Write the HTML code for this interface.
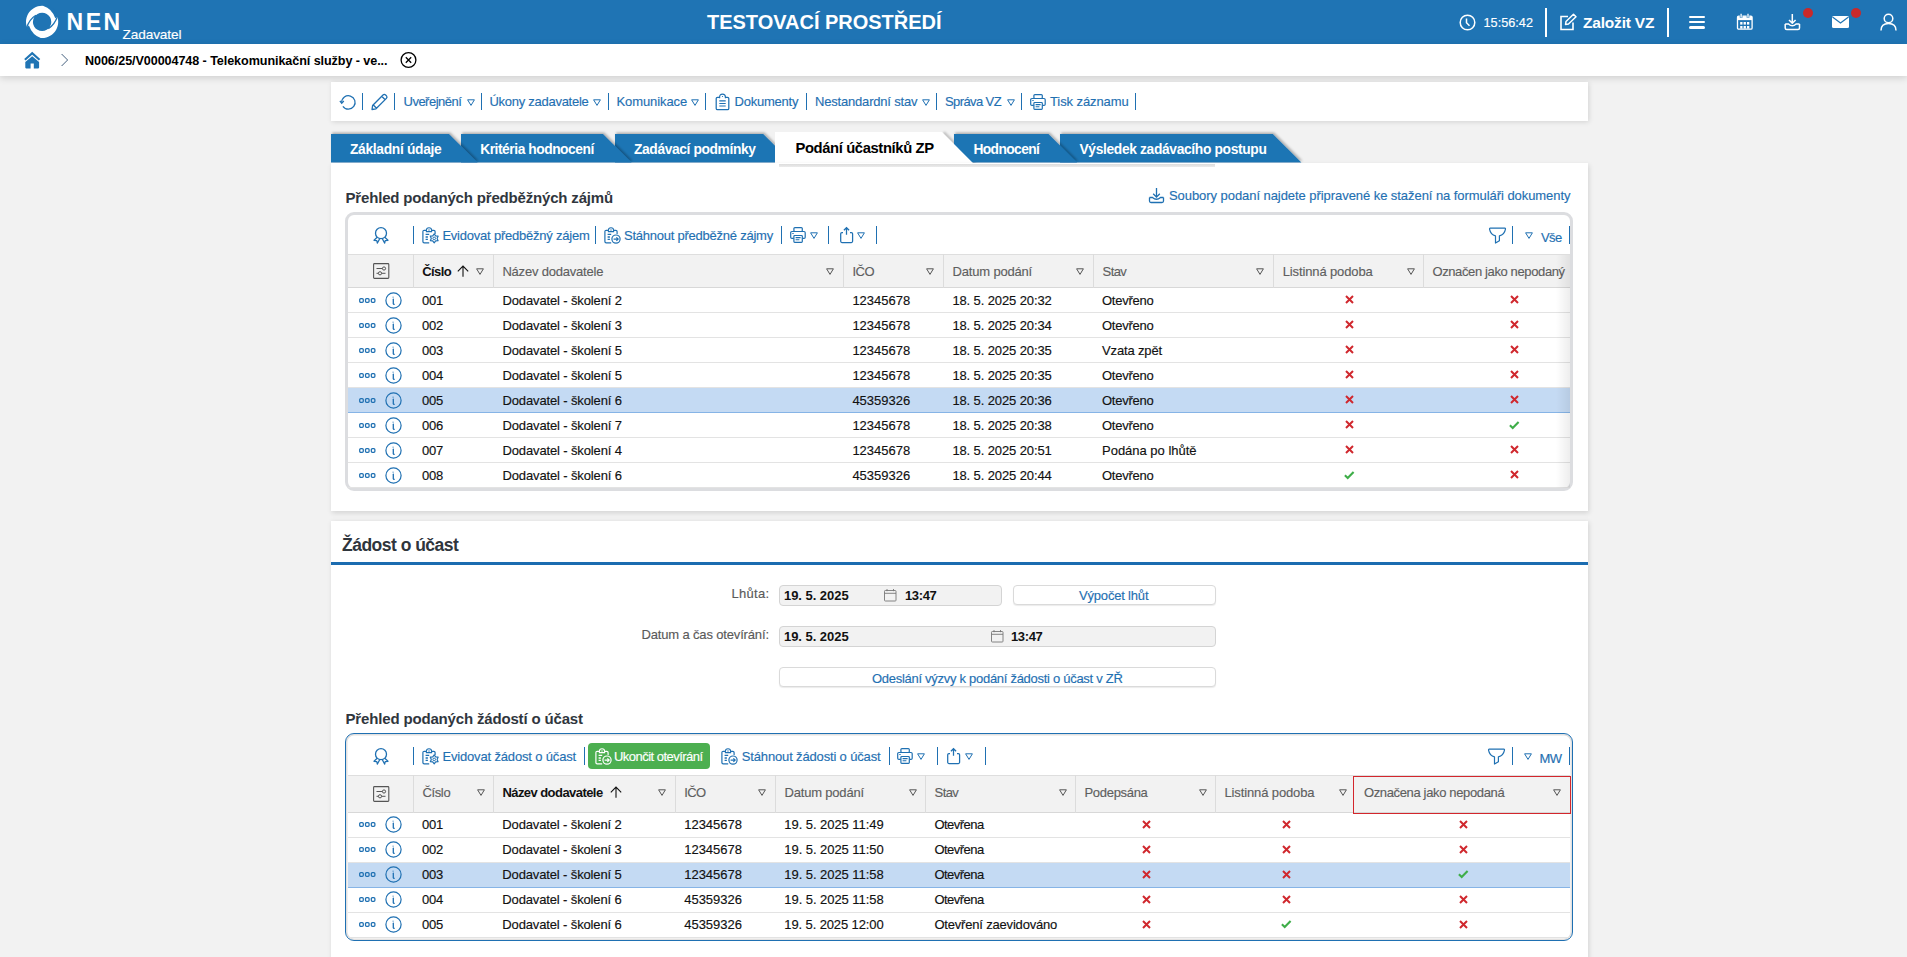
<!DOCTYPE html>
<html><head><meta charset="utf-8"><title>NEN</title>
<style>
html,body{margin:0;padding:0;}
body{width:1907px;height:957px;overflow:hidden;background:#f2f2f2;position:relative;font-family:"Liberation Sans", sans-serif;}
.t{position:absolute;white-space:nowrap;}
.r{-webkit-text-stroke:0.15px currentColor;}
.b{position:absolute;}
svg.b{overflow:visible}
</style></head><body>

<div class="b" style="left:0px;top:0px;width:1907px;height:44px;background:#1f74b4"></div>
<svg class="b" style="left:22px;top:2px" width="40" height="40" viewBox="0 0 40 40">
<path d="M20.1 3.8 A16.1 16.1 0 1 1 20.09 3.8 Z M20.1 10.7 A9.2 9.2 0 1 0 20.11 10.7 Z" fill="#fff" fill-rule="evenodd"/>
<path d="M13.9 13.2 Q7.5 17 4.6 25.8" fill="none" stroke="#1f74b4" stroke-width="1.3"/>
<path d="M4.3 25.7 A16.8 16.8 0 0 0 18.7 36.7 L18.7 35.9 Q10.5 33.5 6.9 23.6 Z" fill="#1f74b4"/>
<path d="M35.9 14.1 A16.8 16.8 0 0 0 21.5 3.1 L21.5 3.9 Q29.7 6.3 33.3 16.2 Z" fill="#1f74b4"/>
<path d="M26.3 26.6 Q32.7 22.8 35.6 14" fill="none" stroke="#1f74b4" stroke-width="1.3"/>
</svg>
<div class="t" style="left:66.5px;top:11.23px;font-size:23px;line-height:23px;font-weight:700;color:#fff;letter-spacing:2.525px;">NEN</div>
<div class="t r" style="left:122.5px;top:28.19px;font-size:13.6px;line-height:13.6px;font-weight:400;color:#fff;letter-spacing:-0.085px;">Zadavatel</div>
<div class="t" style="left:707px;top:12.37px;font-size:20px;line-height:20px;font-weight:700;color:#fff;letter-spacing:-0.016px;">TESTOVACÍ PROSTŘEDÍ</div>
<svg class="b" style="left:1459px;top:14px" width="17" height="17" viewBox="0 0 17 17"><circle cx="8.5" cy="8.5" r="7.3" fill="none" stroke="#fff" stroke-width="1.5"/><path d="M7.5 4.5 L7.5 8.8 L10.5 11.8" fill="none" stroke="#fff" stroke-width="1.5"/></svg>
<div class="t r" style="left:1483.5px;top:16.75px;font-size:12.7px;line-height:12.7px;font-weight:400;color:#fff;letter-spacing:0.010px;">15:56:42</div>
<div class="b" style="left:1545px;top:8px;width:2px;height:29px;background:#fff"></div>
<svg class="b" style="left:1559px;top:13px" width="18" height="18" viewBox="0 0 18 18"><path d="M9 3.5 H2 V16.5 H14 V9.5" fill="none" stroke="#fff" stroke-width="1.6"/><path d="M6.5 11.5 L7 8.5 L14.5 1.2 L17 3.7 L9.5 11 Z" fill="none" stroke="#fff" stroke-width="1.5" stroke-linejoin="round"/></svg>
<div class="t" style="left:1583px;top:14.88px;font-size:15.5px;line-height:15.5px;font-weight:700;color:#fff;letter-spacing:-0.192px;">Založit VZ</div>
<div class="b" style="left:1667px;top:8px;width:2px;height:29px;background:#fff"></div>
<div class="b" style="left:1689px;top:15.5px;width:16px;height:2.8px;background:#fff;border-radius:1.5px"></div>
<div class="b" style="left:1689px;top:20.7px;width:16px;height:2.8px;background:#fff;border-radius:1.5px"></div>
<div class="b" style="left:1689px;top:25.9px;width:16px;height:2.8px;background:#fff;border-radius:1.5px"></div>
<svg class="b" style="left:1736px;top:13px" width="18" height="18" viewBox="0 0 18 18"><rect x="1.5" y="3.2" width="14.6" height="13" rx="1.2" fill="none" stroke="#fff" stroke-width="1.3"/><rect x="1.5" y="3.2" width="14.6" height="3.9" fill="#fff"/><path d="M5.1 0.8 V4.8 M12 0.8 V4.8" stroke="#1f74b4" stroke-width="2.6"/><path d="M5.1 0.8 V4.6 M12 0.8 V4.6" stroke="#fff" stroke-width="1.3"/><rect x="4.2" y="9" width="2.3" height="2.6" fill="#fff"/><rect x="4.2" y="13" width="2.3" height="2.6" fill="#fff"/><rect x="7.6" y="9" width="2.3" height="2.6" fill="#fff"/><rect x="7.6" y="13" width="2.3" height="2.6" fill="#fff"/><rect x="11.0" y="9" width="2.3" height="2.6" fill="#fff"/><rect x="11.0" y="13" width="2.3" height="2.6" fill="#fff"/></svg>
<svg class="b" style="left:1784px;top:13px" width="18" height="18" viewBox="0 0 18 18"><path d="M8.3 1 V10 M5 7 L8.3 10.3 L11.6 7" fill="none" stroke="#fff" stroke-width="1.5"/><path d="M1.2 11 V15 Q1.2 16.5 2.7 16.5 H14 Q15.5 16.5 15.5 15 V11 M1.2 11 H4.5 Q8.3 14.5 12.1 11 H15.5" fill="none" stroke="#fff" stroke-width="1.5"/></svg>
<div class="b" style="left:1803px;top:8px;width:10px;height:10px;border-radius:50%;background:#c8292b"></div>
<svg class="b" style="left:1831px;top:15px" width="19" height="14" viewBox="0 0 19 14"><rect x="1" y="1" width="17" height="12" rx="1.5" fill="#fff"/><path d="M1.5 2 L9.5 8 L17.5 2" fill="none" stroke="#1f74b4" stroke-width="1.2"/></svg>
<div class="b" style="left:1851px;top:8px;width:10px;height:10px;border-radius:50%;background:#c8292b"></div>
<svg class="b" style="left:1880px;top:13px" width="17" height="18" viewBox="0 0 17 18"><circle cx="8.5" cy="5.5" r="4.3" fill="none" stroke="#fff" stroke-width="1.5"/><path d="M1 17.5 Q1 10.5 8.5 10.5 Q16 10.5 16 17.5" fill="none" stroke="#fff" stroke-width="1.5"/></svg>
<div class="b" style="left:0px;top:44px;width:1907px;height:32px;background:#fff;box-shadow:0 2px 7px rgba(0,0,0,0.15)"></div>
<svg class="b" style="left:24px;top:51.5px" width="17" height="17" viewBox="0 0 17 17"><path d="M0.9 7.7 L8.2 1.2 L15.5 7.7" fill="none" stroke="#1f74b4" stroke-width="2.2"/><path d="M1.3 10 L8.2 4.3 L15.1 10 V15.6 Q15.1 16.4 14.3 16.4 H9.8 V11.6 H6.6 V16.4 H2.1 Q1.3 16.4 1.3 15.6 Z" fill="#1f74b4"/></svg>
<svg class="b" style="left:60px;top:53px" width="10" height="14" viewBox="0 0 10 14"><path d="M1.6 1 L7.6 7 L1.6 13" fill="none" stroke="#44607e" stroke-width="1"/></svg>
<div class="t" style="left:85px;top:55.33px;font-size:12.6px;line-height:12.6px;font-weight:700;color:#000;letter-spacing:-0.079px;">N006/25/V00004748 - Telekomunikační služby - ve...</div>
<svg class="b" style="left:400px;top:52px" width="17" height="17" viewBox="0 0 17 17"><circle cx="8.5" cy="8" r="7.4" fill="none" stroke="#000" stroke-width="1.3"/><path d="M5.8 5.3 L11.2 10.7 M11.2 5.3 L5.8 10.7" stroke="#000" stroke-width="1.3"/></svg>
<div class="b" style="left:331px;top:82px;width:1257px;height:39px;background:#fff;box-shadow:1px 1px 5px rgba(0,0,0,0.13)"></div>
<svg class="b" style="left:338.8px;top:94.6px" width="18" height="16" viewBox="0 0 18 16"><path d="M3.9 11.3 A6.7 6.7 0 1 0 2.7 7.6" fill="none" stroke="#1f70b2" stroke-width="1.25"/><path d="M0.9 5.8 L2.7 8.3 L4.8 6" fill="none" stroke="#1f70b2" stroke-width="1.25"/></svg>
<div class="b" style="left:361.5px;top:93px;width:1.3px;height:16.799999999999997px;background:#1f70b2"></div>
<svg class="b" style="left:370px;top:93px" width="18" height="18" viewBox="0 0 18 18"><path d="M2 16.5 L2.6 12.5 L13 2 Q14.3 0.8 15.6 2 L16.5 2.9 Q17.6 4.2 16.4 5.4 L6 15.8 Z M11.7 3.3 L15.2 6.8 M3.1 11.8 L6.3 15" fill="none" stroke="#1f70b2" stroke-width="1.3" stroke-linejoin="round"/></svg>
<div class="b" style="left:393.5px;top:93px;width:1.3px;height:16.799999999999997px;background:#1f70b2"></div>
<div class="t r" style="left:403.5px;top:94.50px;font-size:13px;line-height:13px;font-weight:400;color:#1f70b2;letter-spacing:-0.506px;">Uveřejnění</div>
<svg class="b" style="left:466.5px;top:99px" width="8" height="7" viewBox="0 0 8 7"><path d="M0.6 0.8 L7.4 0.8 L4 6.4 Z" fill="none" stroke="#1f70b2" stroke-width="1.0" stroke-linejoin="round"/></svg>
<div class="b" style="left:480.5px;top:93px;width:1.3px;height:16.799999999999997px;background:#1f70b2"></div>
<div class="t r" style="left:489.5px;top:94.50px;font-size:13px;line-height:13px;font-weight:400;color:#1f70b2;letter-spacing:-0.274px;">Úkony zadavatele</div>
<svg class="b" style="left:593px;top:99px" width="8" height="7" viewBox="0 0 8 7"><path d="M0.6 0.8 L7.4 0.8 L4 6.4 Z" fill="none" stroke="#1f70b2" stroke-width="1.0" stroke-linejoin="round"/></svg>
<div class="b" style="left:607.5px;top:93px;width:1.3px;height:16.799999999999997px;background:#1f70b2"></div>
<div class="t r" style="left:616.5px;top:94.50px;font-size:13px;line-height:13px;font-weight:400;color:#1f70b2;letter-spacing:-0.090px;">Komunikace</div>
<svg class="b" style="left:691px;top:99px" width="8" height="7" viewBox="0 0 8 7"><path d="M0.6 0.8 L7.4 0.8 L4 6.4 Z" fill="none" stroke="#1f70b2" stroke-width="1.0" stroke-linejoin="round"/></svg>
<div class="b" style="left:704.5px;top:93px;width:1.3px;height:16.799999999999997px;background:#1f70b2"></div>
<svg class="b" style="left:715px;top:93px" width="15" height="18" viewBox="0 0 15 18"><path d="M4.6 4.3 H2.5 Q1.2 4.3 1.2 5.6 V15.4 Q1.2 16.7 2.5 16.7 H12.5 Q13.8 16.7 13.8 15.4 V5.6 Q13.8 4.3 12.5 4.3 H10.4" fill="none" stroke="#1f70b2" stroke-width="1.25"/><path d="M4.6 5.2 V4.1 Q4.6 1.1 7.5 1.1 Q10.4 1.1 10.4 4.1 V5.2" fill="none" stroke="#1f70b2" stroke-width="1.2"/><circle cx="7.5" cy="3.5" r="0.6" fill="#1f70b2"/><path d="M4.3 7.9 H10.7 M4.3 10.5 H10.7 M4.3 13 H10.7" stroke="#1f70b2" stroke-width="1.2"/></svg>
<div class="t r" style="left:734.5px;top:94.50px;font-size:13px;line-height:13px;font-weight:400;color:#1f70b2;letter-spacing:-0.231px;">Dokumenty</div>
<div class="b" style="left:805.5px;top:93px;width:1.3px;height:16.799999999999997px;background:#1f70b2"></div>
<div class="t r" style="left:815px;top:94.50px;font-size:13px;line-height:13px;font-weight:400;color:#1f70b2;letter-spacing:-0.188px;">Nestandardní stav</div>
<svg class="b" style="left:921.5px;top:99px" width="8" height="7" viewBox="0 0 8 7"><path d="M0.6 0.8 L7.4 0.8 L4 6.4 Z" fill="none" stroke="#1f70b2" stroke-width="1.0" stroke-linejoin="round"/></svg>
<div class="b" style="left:935.5px;top:93px;width:1.3px;height:16.799999999999997px;background:#1f70b2"></div>
<div class="t r" style="left:945px;top:94.50px;font-size:13px;line-height:13px;font-weight:400;color:#1f70b2;letter-spacing:-0.597px;">Správa VZ</div>
<svg class="b" style="left:1006.5px;top:99px" width="8" height="7" viewBox="0 0 8 7"><path d="M0.6 0.8 L7.4 0.8 L4 6.4 Z" fill="none" stroke="#1f70b2" stroke-width="1.0" stroke-linejoin="round"/></svg>
<div class="b" style="left:1020.5px;top:93px;width:1.3px;height:16.799999999999997px;background:#1f70b2"></div>
<div class="t r" style="left:1050px;top:94.50px;font-size:13px;line-height:13px;font-weight:400;color:#1f70b2;letter-spacing:-0.089px;">Tisk záznamu</div>
<div class="b" style="left:1134.5px;top:93px;width:1.3px;height:16.799999999999997px;background:#1f70b2"></div>
<div class="b" style="left:331px;top:162.6px;width:1257px;height:4px;background:#fff"></div>
<svg class="b" style="left:325px;top:126px" width="1000" height="45" viewBox="0 0 1000 45"><defs><filter id="ts" x="-10%" y="-40%" width="120%" height="180%"><feDropShadow dx="1.2" dy="-1.5" stdDeviation="0.9" flood-color="#000" flood-opacity="0.28"/></filter></defs><defs><filter id="tb" x="-50%" y="-50%" width="200%" height="200%"><feGaussianBlur stdDeviation="1.1"/></filter></defs><path d="M618.5,6.5 L650.5,38.19999999999999" stroke="rgba(0,0,0,0.22)" stroke-width="3" filter="url(#tb)"/><polygon points="735,8 947.8,8 976.4,36.599999999999994 735,36.599999999999994" fill="#1f74b4" filter="url(#ts)"/><polygon points="629,8 723.5,8 752.1,36.599999999999994 629,36.599999999999994" fill="#1f74b4" filter="url(#ts)"/><polygon points="290,8 438.20000000000005,8 466.80000000000007,36.599999999999994 290,36.599999999999994" fill="#1f74b4" filter="url(#ts)"/><polygon points="136,8 278,8 306.6,36.599999999999994 136,36.599999999999994" fill="#1f74b4" filter="url(#ts)"/><polygon points="6,8 124,8 152.6,36.599999999999994 6,36.599999999999994" fill="#1f74b4" filter="url(#ts)"/><polygon points="450,6 617,6 649.2,38.19999999999999 450,38.19999999999999" fill="#fff"/></svg>
<div class="t" style="left:350px;top:142.82px;font-size:13.8px;line-height:13.8px;font-weight:700;color:#fff;letter-spacing:-0.320px;">Základní údaje</div>
<div class="t" style="left:480.2px;top:142.82px;font-size:13.8px;line-height:13.8px;font-weight:700;color:#fff;letter-spacing:-0.456px;">Kritéria hodnocení</div>
<div class="t" style="left:634px;top:142.82px;font-size:13.8px;line-height:13.8px;font-weight:700;color:#fff;letter-spacing:-0.380px;">Zadávací podmínky</div>
<div class="t" style="left:973.4px;top:142.82px;font-size:13.8px;line-height:13.8px;font-weight:700;color:#fff;letter-spacing:-0.600px;">Hodnocení</div>
<div class="t" style="left:1079.5px;top:142.82px;font-size:13.8px;line-height:13.8px;font-weight:700;color:#fff;letter-spacing:-0.344px;">Výsledek zadávacího postupu</div>
<div class="t" style="left:795.4px;top:140.97px;font-size:14.8px;line-height:14.8px;font-weight:700;color:#000;letter-spacing:-0.381px;">Podání účastníků ZP</div>
<div class="b" style="left:331px;top:163px;width:1257px;height:348px;background:#fff;box-shadow:1px 2px 5px rgba(0,0,0,0.13)"></div>
<div class="b" style="left:779px;top:164.3px;width:436px;height:2.3px;background:linear-gradient(#dcdcdc,#ebebeb)"></div>
<div class="t" style="left:345.5px;top:190.00px;font-size:15px;line-height:15px;font-weight:700;color:#30363d;letter-spacing:-0.174px;">Přehled podaných předběžných zájmů</div>
<svg class="b" style="left:1148px;top:187px" width="18" height="17" viewBox="0 0 18 17"><path d="M8.5 1 V10 M5.2 6.8 L8.5 10.1 L11.8 6.8" fill="none" stroke="#1f70b2" stroke-width="1.3"/><path d="M1.5 10.5 V14 Q1.5 15.5 3 15.5 H14 Q15.5 15.5 15.5 14 V10.5 M1.5 10.5 H4.5 Q8.5 14 12.5 10.5 H15.5" fill="none" stroke="#1f70b2" stroke-width="1.3"/></svg>
<div class="t r" style="left:1169px;top:189.20px;font-size:13px;line-height:13px;font-weight:400;color:#1f70b2;letter-spacing:-0.059px;">Soubory podaní najdete připravené ke stažení na formuláři dokumenty</div>
<svg class="b" style="left:1030px;top:93.6px" width="16" height="17" viewBox="0 0 16 17"><rect x="3.9" y="0.6" width="8.4" height="3.9" rx="1" fill="none" stroke="#1f70b2" stroke-width="1.2"/><path d="M3.9 11.4 H1.9 Q0.7 11.4 0.7 10.2 V5.7 Q0.7 4.5 1.9 4.5 H14 Q15.2 4.5 15.2 5.7 V10.2 Q15.2 11.4 14 11.4 H12.3" fill="none" stroke="#1f70b2" stroke-width="1.2"/><rect x="3.9" y="8.5" width="8.4" height="6.8" rx="0.8" fill="#fff" stroke="#1f70b2" stroke-width="1.2"/><path d="M5.6 10.6 H10.6 M5.6 12.7 H9.4" stroke="#1f70b2" stroke-width="1.1"/><path d="M2.3 6.5 H3.7" stroke="#1f70b2" stroke-width="1"/></svg>
<div class="b" style="left:345px;top:212px;width:1222px;height:273px;border:3px solid #dcdde0;border-radius:9px;background:#fff;"></div>
<div class="b" style="left:348px;top:254.2px;width:1222px;height:33.8px;background:#f2f2f2;border-top:1px solid #dedede;border-bottom:1px solid #d8d8d8;box-sizing:border-box"></div>
<div class="b" style="left:412.8px;top:254.2px;width:1px;height:33.8px;background:#dcdcdc"></div>
<div class="b" style="left:492.9px;top:254.2px;width:1px;height:33.8px;background:#dcdcdc"></div>
<div class="b" style="left:843.1px;top:254.2px;width:1px;height:33.8px;background:#dcdcdc"></div>
<div class="b" style="left:943.1px;top:254.2px;width:1px;height:33.8px;background:#dcdcdc"></div>
<div class="b" style="left:1093.1px;top:254.2px;width:1px;height:33.8px;background:#dcdcdc"></div>
<div class="b" style="left:1273.2px;top:254.2px;width:1px;height:33.8px;background:#dcdcdc"></div>
<div class="b" style="left:1422.9px;top:254.2px;width:1px;height:33.8px;background:#dcdcdc"></div>
<svg class="b" style="left:372.5px;top:263.09999999999997px" width="17" height="16" viewBox="0 0 17 16"><rect x="0.6" y="0.6" width="15.2" height="14.8" rx="0.8" fill="none" stroke="#555" stroke-width="1.1"/><path d="M3.5 5.5 H12.5 M3.5 10.3 H12.5" stroke="#555" stroke-width="1"/><circle cx="11" cy="5.5" r="1.6" fill="#f2f2f2" stroke="#555" stroke-width="1"/><circle cx="7" cy="10.3" r="1.6" fill="#f2f2f2" stroke="#555" stroke-width="1"/></svg>
<div class="t" style="left:422.3px;top:264.80px;font-size:13px;line-height:13px;font-weight:700;color:#111;letter-spacing:-0.600px;">Číslo</div>
<svg class="b" style="left:457px;top:265.0px" width="12" height="12" viewBox="0 0 12 12"><path d="M6 11.8 V1.2 M0.8 6.3 L6 1 L11.2 6.3" fill="none" stroke="#111" stroke-width="1.1"/></svg>
<svg class="b" style="left:476px;top:267.8px" width="8" height="7" viewBox="0 0 8 7"><path d="M0.6 0.8 L7.4 0.8 L4 6.4 Z" fill="none" stroke="#555" stroke-width="1.0" stroke-linejoin="round"/></svg>
<div class="t r" style="left:502.4px;top:264.80px;font-size:13px;line-height:13px;font-weight:400;color:#5f5f5f;letter-spacing:-0.203px;">Název dodavatele</div>
<svg class="b" style="left:826px;top:267.8px" width="8" height="7" viewBox="0 0 8 7"><path d="M0.6 0.8 L7.4 0.8 L4 6.4 Z" fill="none" stroke="#555" stroke-width="1.0" stroke-linejoin="round"/></svg>
<div class="t r" style="left:852.6px;top:264.80px;font-size:13px;line-height:13px;font-weight:400;color:#5f5f5f;letter-spacing:-0.600px;">IČO</div>
<svg class="b" style="left:926px;top:267.8px" width="8" height="7" viewBox="0 0 8 7"><path d="M0.6 0.8 L7.4 0.8 L4 6.4 Z" fill="none" stroke="#555" stroke-width="1.0" stroke-linejoin="round"/></svg>
<div class="t r" style="left:952.6px;top:264.80px;font-size:13px;line-height:13px;font-weight:400;color:#5f5f5f;letter-spacing:-0.186px;">Datum podání</div>
<svg class="b" style="left:1076px;top:267.8px" width="8" height="7" viewBox="0 0 8 7"><path d="M0.6 0.8 L7.4 0.8 L4 6.4 Z" fill="none" stroke="#555" stroke-width="1.0" stroke-linejoin="round"/></svg>
<div class="t r" style="left:1102.6px;top:264.80px;font-size:13px;line-height:13px;font-weight:400;color:#5f5f5f;letter-spacing:-0.600px;">Stav</div>
<svg class="b" style="left:1256px;top:267.8px" width="8" height="7" viewBox="0 0 8 7"><path d="M0.6 0.8 L7.4 0.8 L4 6.4 Z" fill="none" stroke="#555" stroke-width="1.0" stroke-linejoin="round"/></svg>
<div class="t r" style="left:1282.7px;top:264.80px;font-size:13px;line-height:13px;font-weight:400;color:#5f5f5f;letter-spacing:-0.126px;">Listinná podoba</div>
<svg class="b" style="left:1406.5px;top:267.8px" width="8" height="7" viewBox="0 0 8 7"><path d="M0.6 0.8 L7.4 0.8 L4 6.4 Z" fill="none" stroke="#555" stroke-width="1.0" stroke-linejoin="round"/></svg>
<div class="t r" style="left:1432.4px;top:264.80px;font-size:13px;line-height:13px;font-weight:400;color:#5f5f5f;letter-spacing:-0.376px;">Označen jako nepodaný</div>
<div class="b" style="left:348px;top:312.0px;width:1222px;height:1px;background:#e3e3e3"></div>
<svg class="b" style="left:359.1px;top:297.5px" width="18" height="5" viewBox="0 0 18 5"><rect x="0.7" y="0.7" width="3.6" height="3.6" rx="1.1" fill="none" stroke="#1f70b2" stroke-width="1.25"/><rect x="6.5" y="0.7" width="3.6" height="3.6" rx="1.1" fill="none" stroke="#1f70b2" stroke-width="1.25"/><rect x="12.299999999999999" y="0.7" width="3.6" height="3.6" rx="1.1" fill="none" stroke="#1f70b2" stroke-width="1.25"/></svg>
<svg class="b" style="left:385.2px;top:291.6px" width="17" height="17" viewBox="0 0 17 17"><circle cx="8.5" cy="8.5" r="7.6" fill="none" stroke="#1f70b2" stroke-width="1.2"/><path d="M8.1 4.8 V5.4 M7.6 7.5 L8.3 7.3 L8.3 11.8 Q8.6 12.6 9.6 12.2" fill="none" stroke="#1f70b2" stroke-width="1.3"/></svg>
<div class="t r" style="left:422px;top:293.80px;font-size:13px;line-height:13px;font-weight:400;color:#111;letter-spacing:-0.180px;">001</div>
<div class="t r" style="left:502.5px;top:293.80px;font-size:13px;line-height:13px;font-weight:400;color:#111;letter-spacing:-0.135px;">Dodavatel - školení 2</div>
<div class="t r" style="left:852.4px;top:293.80px;font-size:13px;line-height:13px;font-weight:400;color:#111;letter-spacing:-0.001px;">12345678</div>
<div class="t r" style="left:952.4px;top:293.80px;font-size:13px;line-height:13px;font-weight:400;color:#111;letter-spacing:-0.114px;">18. 5. 2025 20:32</div>
<div class="t r" style="left:1102px;top:293.80px;font-size:13px;line-height:13px;font-weight:400;color:#111;letter-spacing:-0.263px;">Otevřeno</div>
<svg class="b" style="left:1344.8px;top:295.0px" width="9" height="9" viewBox="0 0 9 9"><path d="M1 1 L8 8 M8 1 L1 8" stroke="#d0282e" stroke-width="2"/></svg>
<svg class="b" style="left:1509.7px;top:295.0px" width="9" height="9" viewBox="0 0 9 9"><path d="M1 1 L8 8 M8 1 L1 8" stroke="#d0282e" stroke-width="2"/></svg>
<div class="b" style="left:348px;top:337.0px;width:1222px;height:1px;background:#e3e3e3"></div>
<svg class="b" style="left:359.1px;top:322.5px" width="18" height="5" viewBox="0 0 18 5"><rect x="0.7" y="0.7" width="3.6" height="3.6" rx="1.1" fill="none" stroke="#1f70b2" stroke-width="1.25"/><rect x="6.5" y="0.7" width="3.6" height="3.6" rx="1.1" fill="none" stroke="#1f70b2" stroke-width="1.25"/><rect x="12.299999999999999" y="0.7" width="3.6" height="3.6" rx="1.1" fill="none" stroke="#1f70b2" stroke-width="1.25"/></svg>
<svg class="b" style="left:385.2px;top:316.6px" width="17" height="17" viewBox="0 0 17 17"><circle cx="8.5" cy="8.5" r="7.6" fill="none" stroke="#1f70b2" stroke-width="1.2"/><path d="M8.1 4.8 V5.4 M7.6 7.5 L8.3 7.3 L8.3 11.8 Q8.6 12.6 9.6 12.2" fill="none" stroke="#1f70b2" stroke-width="1.3"/></svg>
<div class="t r" style="left:422px;top:318.80px;font-size:13px;line-height:13px;font-weight:400;color:#111;letter-spacing:-0.180px;">002</div>
<div class="t r" style="left:502.5px;top:318.80px;font-size:13px;line-height:13px;font-weight:400;color:#111;letter-spacing:-0.135px;">Dodavatel - školení 3</div>
<div class="t r" style="left:852.4px;top:318.80px;font-size:13px;line-height:13px;font-weight:400;color:#111;letter-spacing:-0.001px;">12345678</div>
<div class="t r" style="left:952.4px;top:318.80px;font-size:13px;line-height:13px;font-weight:400;color:#111;letter-spacing:-0.114px;">18. 5. 2025 20:34</div>
<div class="t r" style="left:1102px;top:318.80px;font-size:13px;line-height:13px;font-weight:400;color:#111;letter-spacing:-0.263px;">Otevřeno</div>
<svg class="b" style="left:1344.8px;top:320.0px" width="9" height="9" viewBox="0 0 9 9"><path d="M1 1 L8 8 M8 1 L1 8" stroke="#d0282e" stroke-width="2"/></svg>
<svg class="b" style="left:1509.7px;top:320.0px" width="9" height="9" viewBox="0 0 9 9"><path d="M1 1 L8 8 M8 1 L1 8" stroke="#d0282e" stroke-width="2"/></svg>
<div class="b" style="left:348px;top:362.0px;width:1222px;height:1px;background:#e3e3e3"></div>
<svg class="b" style="left:359.1px;top:347.5px" width="18" height="5" viewBox="0 0 18 5"><rect x="0.7" y="0.7" width="3.6" height="3.6" rx="1.1" fill="none" stroke="#1f70b2" stroke-width="1.25"/><rect x="6.5" y="0.7" width="3.6" height="3.6" rx="1.1" fill="none" stroke="#1f70b2" stroke-width="1.25"/><rect x="12.299999999999999" y="0.7" width="3.6" height="3.6" rx="1.1" fill="none" stroke="#1f70b2" stroke-width="1.25"/></svg>
<svg class="b" style="left:385.2px;top:341.6px" width="17" height="17" viewBox="0 0 17 17"><circle cx="8.5" cy="8.5" r="7.6" fill="none" stroke="#1f70b2" stroke-width="1.2"/><path d="M8.1 4.8 V5.4 M7.6 7.5 L8.3 7.3 L8.3 11.8 Q8.6 12.6 9.6 12.2" fill="none" stroke="#1f70b2" stroke-width="1.3"/></svg>
<div class="t r" style="left:422px;top:343.80px;font-size:13px;line-height:13px;font-weight:400;color:#111;letter-spacing:-0.180px;">003</div>
<div class="t r" style="left:502.5px;top:343.80px;font-size:13px;line-height:13px;font-weight:400;color:#111;letter-spacing:-0.135px;">Dodavatel - školení 5</div>
<div class="t r" style="left:852.4px;top:343.80px;font-size:13px;line-height:13px;font-weight:400;color:#111;letter-spacing:-0.001px;">12345678</div>
<div class="t r" style="left:952.4px;top:343.80px;font-size:13px;line-height:13px;font-weight:400;color:#111;letter-spacing:-0.114px;">18. 5. 2025 20:35</div>
<div class="t r" style="left:1102px;top:343.80px;font-size:13px;line-height:13px;font-weight:400;color:#111;letter-spacing:-0.146px;">Vzata zpět</div>
<svg class="b" style="left:1344.8px;top:345.0px" width="9" height="9" viewBox="0 0 9 9"><path d="M1 1 L8 8 M8 1 L1 8" stroke="#d0282e" stroke-width="2"/></svg>
<svg class="b" style="left:1509.7px;top:345.0px" width="9" height="9" viewBox="0 0 9 9"><path d="M1 1 L8 8 M8 1 L1 8" stroke="#d0282e" stroke-width="2"/></svg>
<div class="b" style="left:348px;top:387.0px;width:1222px;height:1px;background:#e3e3e3"></div>
<svg class="b" style="left:359.1px;top:372.5px" width="18" height="5" viewBox="0 0 18 5"><rect x="0.7" y="0.7" width="3.6" height="3.6" rx="1.1" fill="none" stroke="#1f70b2" stroke-width="1.25"/><rect x="6.5" y="0.7" width="3.6" height="3.6" rx="1.1" fill="none" stroke="#1f70b2" stroke-width="1.25"/><rect x="12.299999999999999" y="0.7" width="3.6" height="3.6" rx="1.1" fill="none" stroke="#1f70b2" stroke-width="1.25"/></svg>
<svg class="b" style="left:385.2px;top:366.6px" width="17" height="17" viewBox="0 0 17 17"><circle cx="8.5" cy="8.5" r="7.6" fill="none" stroke="#1f70b2" stroke-width="1.2"/><path d="M8.1 4.8 V5.4 M7.6 7.5 L8.3 7.3 L8.3 11.8 Q8.6 12.6 9.6 12.2" fill="none" stroke="#1f70b2" stroke-width="1.3"/></svg>
<div class="t r" style="left:422px;top:368.80px;font-size:13px;line-height:13px;font-weight:400;color:#111;letter-spacing:-0.180px;">004</div>
<div class="t r" style="left:502.5px;top:368.80px;font-size:13px;line-height:13px;font-weight:400;color:#111;letter-spacing:-0.135px;">Dodavatel - školení 5</div>
<div class="t r" style="left:852.4px;top:368.80px;font-size:13px;line-height:13px;font-weight:400;color:#111;letter-spacing:-0.001px;">12345678</div>
<div class="t r" style="left:952.4px;top:368.80px;font-size:13px;line-height:13px;font-weight:400;color:#111;letter-spacing:-0.114px;">18. 5. 2025 20:35</div>
<div class="t r" style="left:1102px;top:368.80px;font-size:13px;line-height:13px;font-weight:400;color:#111;letter-spacing:-0.263px;">Otevřeno</div>
<svg class="b" style="left:1344.8px;top:370.0px" width="9" height="9" viewBox="0 0 9 9"><path d="M1 1 L8 8 M8 1 L1 8" stroke="#d0282e" stroke-width="2"/></svg>
<svg class="b" style="left:1509.7px;top:370.0px" width="9" height="9" viewBox="0 0 9 9"><path d="M1 1 L8 8 M8 1 L1 8" stroke="#d0282e" stroke-width="2"/></svg>
<div class="b" style="left:348px;top:388.0px;width:1222px;height:25px;background:#c4daf3;border-bottom:1px solid #86b4e6;box-sizing:border-box"></div>
<svg class="b" style="left:359.1px;top:397.5px" width="18" height="5" viewBox="0 0 18 5"><rect x="0.7" y="0.7" width="3.6" height="3.6" rx="1.1" fill="none" stroke="#1f70b2" stroke-width="1.25"/><rect x="6.5" y="0.7" width="3.6" height="3.6" rx="1.1" fill="none" stroke="#1f70b2" stroke-width="1.25"/><rect x="12.299999999999999" y="0.7" width="3.6" height="3.6" rx="1.1" fill="none" stroke="#1f70b2" stroke-width="1.25"/></svg>
<svg class="b" style="left:385.2px;top:391.6px" width="17" height="17" viewBox="0 0 17 17"><circle cx="8.5" cy="8.5" r="7.6" fill="none" stroke="#1f70b2" stroke-width="1.2"/><path d="M8.1 4.8 V5.4 M7.6 7.5 L8.3 7.3 L8.3 11.8 Q8.6 12.6 9.6 12.2" fill="none" stroke="#1f70b2" stroke-width="1.3"/></svg>
<div class="t r" style="left:422px;top:393.80px;font-size:13px;line-height:13px;font-weight:400;color:#111;letter-spacing:-0.180px;">005</div>
<div class="t r" style="left:502.5px;top:393.80px;font-size:13px;line-height:13px;font-weight:400;color:#111;letter-spacing:-0.135px;">Dodavatel - školení 6</div>
<div class="t r" style="left:852.4px;top:393.80px;font-size:13px;line-height:13px;font-weight:400;color:#111;letter-spacing:-0.001px;">45359326</div>
<div class="t r" style="left:952.4px;top:393.80px;font-size:13px;line-height:13px;font-weight:400;color:#111;letter-spacing:-0.114px;">18. 5. 2025 20:36</div>
<div class="t r" style="left:1102px;top:393.80px;font-size:13px;line-height:13px;font-weight:400;color:#111;letter-spacing:-0.263px;">Otevřeno</div>
<svg class="b" style="left:1344.8px;top:395.0px" width="9" height="9" viewBox="0 0 9 9"><path d="M1 1 L8 8 M8 1 L1 8" stroke="#d0282e" stroke-width="2"/></svg>
<svg class="b" style="left:1509.7px;top:395.0px" width="9" height="9" viewBox="0 0 9 9"><path d="M1 1 L8 8 M8 1 L1 8" stroke="#d0282e" stroke-width="2"/></svg>
<div class="b" style="left:348px;top:437.0px;width:1222px;height:1px;background:#e3e3e3"></div>
<svg class="b" style="left:359.1px;top:422.5px" width="18" height="5" viewBox="0 0 18 5"><rect x="0.7" y="0.7" width="3.6" height="3.6" rx="1.1" fill="none" stroke="#1f70b2" stroke-width="1.25"/><rect x="6.5" y="0.7" width="3.6" height="3.6" rx="1.1" fill="none" stroke="#1f70b2" stroke-width="1.25"/><rect x="12.299999999999999" y="0.7" width="3.6" height="3.6" rx="1.1" fill="none" stroke="#1f70b2" stroke-width="1.25"/></svg>
<svg class="b" style="left:385.2px;top:416.6px" width="17" height="17" viewBox="0 0 17 17"><circle cx="8.5" cy="8.5" r="7.6" fill="none" stroke="#1f70b2" stroke-width="1.2"/><path d="M8.1 4.8 V5.4 M7.6 7.5 L8.3 7.3 L8.3 11.8 Q8.6 12.6 9.6 12.2" fill="none" stroke="#1f70b2" stroke-width="1.3"/></svg>
<div class="t r" style="left:422px;top:418.80px;font-size:13px;line-height:13px;font-weight:400;color:#111;letter-spacing:-0.180px;">006</div>
<div class="t r" style="left:502.5px;top:418.80px;font-size:13px;line-height:13px;font-weight:400;color:#111;letter-spacing:-0.135px;">Dodavatel - školení 7</div>
<div class="t r" style="left:852.4px;top:418.80px;font-size:13px;line-height:13px;font-weight:400;color:#111;letter-spacing:-0.001px;">12345678</div>
<div class="t r" style="left:952.4px;top:418.80px;font-size:13px;line-height:13px;font-weight:400;color:#111;letter-spacing:-0.114px;">18. 5. 2025 20:38</div>
<div class="t r" style="left:1102px;top:418.80px;font-size:13px;line-height:13px;font-weight:400;color:#111;letter-spacing:-0.263px;">Otevřeno</div>
<svg class="b" style="left:1344.8px;top:420.0px" width="9" height="9" viewBox="0 0 9 9"><path d="M1 1 L8 8 M8 1 L1 8" stroke="#d0282e" stroke-width="2"/></svg>
<svg class="b" style="left:1509.2px;top:420.8px" width="10" height="8" viewBox="0 0 10 8"><path d="M0.9 4.3 L3.7 7 L9.6 0.9" fill="none" stroke="#3fae49" stroke-width="2.1"/></svg>
<div class="b" style="left:348px;top:462.0px;width:1222px;height:1px;background:#e3e3e3"></div>
<svg class="b" style="left:359.1px;top:447.5px" width="18" height="5" viewBox="0 0 18 5"><rect x="0.7" y="0.7" width="3.6" height="3.6" rx="1.1" fill="none" stroke="#1f70b2" stroke-width="1.25"/><rect x="6.5" y="0.7" width="3.6" height="3.6" rx="1.1" fill="none" stroke="#1f70b2" stroke-width="1.25"/><rect x="12.299999999999999" y="0.7" width="3.6" height="3.6" rx="1.1" fill="none" stroke="#1f70b2" stroke-width="1.25"/></svg>
<svg class="b" style="left:385.2px;top:441.6px" width="17" height="17" viewBox="0 0 17 17"><circle cx="8.5" cy="8.5" r="7.6" fill="none" stroke="#1f70b2" stroke-width="1.2"/><path d="M8.1 4.8 V5.4 M7.6 7.5 L8.3 7.3 L8.3 11.8 Q8.6 12.6 9.6 12.2" fill="none" stroke="#1f70b2" stroke-width="1.3"/></svg>
<div class="t r" style="left:422px;top:443.80px;font-size:13px;line-height:13px;font-weight:400;color:#111;letter-spacing:-0.180px;">007</div>
<div class="t r" style="left:502.5px;top:443.80px;font-size:13px;line-height:13px;font-weight:400;color:#111;letter-spacing:-0.135px;">Dodavatel - školení 4</div>
<div class="t r" style="left:852.4px;top:443.80px;font-size:13px;line-height:13px;font-weight:400;color:#111;letter-spacing:-0.001px;">12345678</div>
<div class="t r" style="left:952.4px;top:443.80px;font-size:13px;line-height:13px;font-weight:400;color:#111;letter-spacing:-0.114px;">18. 5. 2025 20:51</div>
<div class="t r" style="left:1102px;top:443.80px;font-size:13px;line-height:13px;font-weight:400;color:#111;letter-spacing:-0.012px;">Podána po lhůtě</div>
<svg class="b" style="left:1344.8px;top:445.0px" width="9" height="9" viewBox="0 0 9 9"><path d="M1 1 L8 8 M8 1 L1 8" stroke="#d0282e" stroke-width="2"/></svg>
<svg class="b" style="left:1509.7px;top:445.0px" width="9" height="9" viewBox="0 0 9 9"><path d="M1 1 L8 8 M8 1 L1 8" stroke="#d0282e" stroke-width="2"/></svg>
<div class="b" style="left:348px;top:487.0px;width:1222px;height:1px;background:#e3e3e3"></div>
<svg class="b" style="left:359.1px;top:472.5px" width="18" height="5" viewBox="0 0 18 5"><rect x="0.7" y="0.7" width="3.6" height="3.6" rx="1.1" fill="none" stroke="#1f70b2" stroke-width="1.25"/><rect x="6.5" y="0.7" width="3.6" height="3.6" rx="1.1" fill="none" stroke="#1f70b2" stroke-width="1.25"/><rect x="12.299999999999999" y="0.7" width="3.6" height="3.6" rx="1.1" fill="none" stroke="#1f70b2" stroke-width="1.25"/></svg>
<svg class="b" style="left:385.2px;top:466.6px" width="17" height="17" viewBox="0 0 17 17"><circle cx="8.5" cy="8.5" r="7.6" fill="none" stroke="#1f70b2" stroke-width="1.2"/><path d="M8.1 4.8 V5.4 M7.6 7.5 L8.3 7.3 L8.3 11.8 Q8.6 12.6 9.6 12.2" fill="none" stroke="#1f70b2" stroke-width="1.3"/></svg>
<div class="t r" style="left:422px;top:468.80px;font-size:13px;line-height:13px;font-weight:400;color:#111;letter-spacing:-0.180px;">008</div>
<div class="t r" style="left:502.5px;top:468.80px;font-size:13px;line-height:13px;font-weight:400;color:#111;letter-spacing:-0.135px;">Dodavatel - školení 6</div>
<div class="t r" style="left:852.4px;top:468.80px;font-size:13px;line-height:13px;font-weight:400;color:#111;letter-spacing:-0.001px;">45359326</div>
<div class="t r" style="left:952.4px;top:468.80px;font-size:13px;line-height:13px;font-weight:400;color:#111;letter-spacing:-0.114px;">18. 5. 2025 20:44</div>
<div class="t r" style="left:1102px;top:468.80px;font-size:13px;line-height:13px;font-weight:400;color:#111;letter-spacing:-0.263px;">Otevřeno</div>
<svg class="b" style="left:1344.3px;top:470.8px" width="10" height="8" viewBox="0 0 10 8"><path d="M0.9 4.3 L3.7 7 L9.6 0.9" fill="none" stroke="#3fae49" stroke-width="2.1"/></svg>
<svg class="b" style="left:1509.7px;top:470.0px" width="9" height="9" viewBox="0 0 9 9"><path d="M1 1 L8 8 M8 1 L1 8" stroke="#d0282e" stroke-width="2"/></svg>
<div class="b" style="left:1556px;top:254.5px;width:14px;height:233px;background:linear-gradient(90deg,rgba(0,0,0,0),rgba(0,0,0,0.07))"></div>
<svg class="b" style="left:373px;top:226.5px" width="17" height="17" viewBox="0 0 17 17"><circle cx="8" cy="6.2" r="5.5" fill="none" stroke="#1f70b2" stroke-width="1.3"/><path d="M4.2 10.2 L1 13.3 L3.8 13.6 L4.3 16.2 L6.6 11.9 M11.8 10.2 L15 13.3 L12.2 13.6 L11.7 16.2 L9.4 11.9" fill="none" stroke="#1f70b2" stroke-width="1.2" stroke-linejoin="round"/></svg>
<div class="b" style="left:412.5px;top:226px;width:1.3px;height:17.5px;background:#1f70b2"></div>
<svg class="b" style="left:421.5px;top:226.5px" width="17" height="17" viewBox="0 0 17 17"><path d="M4.3 3.3 H2.2 Q0.9 3.3 0.9 4.6 V14.6 Q0.9 15.9 2.2 15.9 H7.2 M13.1 7 V4.6 Q13.1 3.3 11.8 3.3 H9.7" fill="none" stroke="#1f70b2" stroke-width="1.2"/><path d="M4.4 4.6 V3.2 Q4.4 0.8 7 0.8 Q9.6 0.8 9.6 3.2 V4.6 Z" fill="none" stroke="#1f70b2" stroke-width="1.1"/><circle cx="7" cy="3" r="0.7" fill="#1f70b2"/><path d="M3.6 7.3 H7.2 M3.6 10 H5.9 M3.6 12.3 H5.9" stroke="#1f70b2" stroke-width="1.3"/><polygon points="12.20,6.90 13.65,8.89 16.10,9.15 15.10,11.40 16.10,13.65 13.65,13.91 12.20,15.90 10.75,13.91 8.30,13.65 9.30,11.40 8.30,9.15 10.75,8.89" fill="#fff" stroke="#1f70b2" stroke-width="1.15" stroke-linejoin="round"/><circle cx="12.2" cy="11.4" r="1.3" fill="none" stroke="#1f70b2" stroke-width="1"/></svg>
<div class="t r" style="left:442.4px;top:229.00px;font-size:13px;line-height:13px;font-weight:400;color:#1f70b2;letter-spacing:-0.219px;">Evidovat předběžný zájem</div>
<div class="b" style="left:594.5px;top:226px;width:1.3px;height:17.5px;background:#1f70b2"></div>
<svg class="b" style="left:604px;top:226.5px" width="17" height="17" viewBox="0 0 17 17"><path d="M4.3 3.3 H2.2 Q0.9 3.3 0.9 4.6 V14.6 Q0.9 15.9 2.2 15.9 H7.2 M13.1 7 V4.6 Q13.1 3.3 11.8 3.3 H9.7" fill="none" stroke="#1f70b2" stroke-width="1.2"/><path d="M4.4 4.6 V3.2 Q4.4 0.8 7 0.8 Q9.6 0.8 9.6 3.2 V4.6 Z" fill="none" stroke="#1f70b2" stroke-width="1.1"/><circle cx="7" cy="3" r="0.7" fill="#1f70b2"/><path d="M3.6 7.3 H7.2 M3.6 10 H5.9 M3.6 12.3 H5.9" stroke="#1f70b2" stroke-width="1.3"/><circle cx="12" cy="12.1" r="4.1" fill="#fff" stroke="#1f70b2" stroke-width="1.2"/><path d="M9.6 12.1 H14.2 M12.4 10.3 L14.2 12.1 L12.4 13.9" fill="none" stroke="#1f70b2" stroke-width="1.2"/></svg>
<div class="t r" style="left:624px;top:229.00px;font-size:13px;line-height:13px;font-weight:400;color:#1f70b2;letter-spacing:-0.237px;">Stáhnout předběžné zájmy</div>
<div class="b" style="left:780.5px;top:226px;width:1.3px;height:17.5px;background:#1f70b2"></div>
<svg class="b" style="left:790px;top:227px" width="16" height="17" viewBox="0 0 16 17"><rect x="3.9" y="0.6" width="8.4" height="3.9" rx="1" fill="none" stroke="#1f70b2" stroke-width="1.2"/><path d="M3.9 11.4 H1.9 Q0.7 11.4 0.7 10.2 V5.7 Q0.7 4.5 1.9 4.5 H14 Q15.2 4.5 15.2 5.7 V10.2 Q15.2 11.4 14 11.4 H12.3" fill="none" stroke="#1f70b2" stroke-width="1.2"/><rect x="3.9" y="8.5" width="8.4" height="6.8" rx="0.8" fill="#fff" stroke="#1f70b2" stroke-width="1.2"/><path d="M5.6 10.6 H10.6 M5.6 12.7 H9.4" stroke="#1f70b2" stroke-width="1.1"/><path d="M2.3 6.5 H3.7" stroke="#1f70b2" stroke-width="1"/></svg>
<svg class="b" style="left:810.3px;top:231.5px" width="8" height="7" viewBox="0 0 8 7"><path d="M0.6 0.8 L7.4 0.8 L4 6.4 Z" fill="none" stroke="#1f70b2" stroke-width="1.0" stroke-linejoin="round"/></svg>
<div class="b" style="left:827.5px;top:226px;width:1.3px;height:17.5px;background:#1f70b2"></div>
<svg class="b" style="left:839.8px;top:227px" width="14" height="17" viewBox="0 0 14 17"><path d="M3 5.6 H1.9 Q0.7 5.6 0.7 6.8 V14.3 Q0.7 15.5 1.9 15.5 H11.4 Q12.6 15.5 12.6 14.3 V6.8 Q12.6 5.6 11.4 5.6 H10" fill="none" stroke="#1f70b2" stroke-width="1.25"/><path d="M6.5 7.8 V0.8 M3.9 3.3 L6.5 0.7 L9.1 3.3" fill="none" stroke="#1f70b2" stroke-width="1.25"/></svg>
<svg class="b" style="left:857.2px;top:231.5px" width="8" height="7" viewBox="0 0 8 7"><path d="M0.6 0.8 L7.4 0.8 L4 6.4 Z" fill="none" stroke="#1f70b2" stroke-width="1.0" stroke-linejoin="round"/></svg>
<div class="b" style="left:875.5px;top:226px;width:1.3px;height:17.5px;background:#1f70b2"></div>
<svg class="b" style="left:1488.5px;top:226.5px" width="17" height="17" viewBox="0 0 17 17"><path d="M1.2 1.1 H15.9 Q16.7 1.1 16.4 2.3 Q15.4 7.6 10.4 8.9 V13.7 L6.5 16 V8.9 Q1.6 7.6 0.6 2.3 Q0.4 1.1 1.2 1.1 Z" fill="none" stroke="#1f70b2" stroke-width="1.2" stroke-linejoin="round"/></svg>
<div class="b" style="left:1511.5px;top:226px;width:1.3px;height:17.69999999999999px;background:#1f70b2"></div>
<svg class="b" style="left:1525px;top:231.8px" width="8" height="7" viewBox="0 0 8 7"><path d="M0.6 0.8 L7.4 0.8 L4 6.4 Z" fill="none" stroke="#1f70b2" stroke-width="1.0" stroke-linejoin="round"/></svg>
<div class="t r" style="left:1541px;top:231.20px;font-size:13px;line-height:13px;font-weight:400;color:#1f70b2;letter-spacing:-0.585px;">Vše</div>
<div class="b" style="left:1568.5px;top:226px;width:1.3px;height:17.69999999999999px;background:#1f70b2"></div>
<div class="b" style="left:331px;top:521px;width:1257px;height:440px;background:#fff;box-shadow:1px 1px 5px rgba(0,0,0,0.13)"></div>
<div class="t" style="left:342px;top:536.99px;font-size:17.5px;line-height:17.5px;font-weight:700;color:#2f353c;letter-spacing:-0.513px;">Žádost o účast</div>
<div class="b" style="left:331px;top:562px;width:1257px;height:3px;background:#1b6cb0"></div>
<div class="t r" style="left:731.5px;top:587.30px;font-size:13px;line-height:13px;font-weight:400;color:#5a5a5a;letter-spacing:0.274px;">Lhůta:</div>
<div class="b" style="left:778.5px;top:585px;width:223px;height:20.5px;background:#f2f2f2;border:1px solid #d4d4d4;border-radius:4px;box-sizing:border-box"></div>
<div class="t" style="left:784px;top:589.00px;font-size:13px;line-height:13px;font-weight:700;color:#111;letter-spacing:-0.043px;">19. 5. 2025</div>
<svg class="b" style="left:884px;top:589px" width="13" height="13" viewBox="0 0 13 13"><rect x="0.5" y="1.5" width="11.5" height="10.5" rx="0.8" fill="none" stroke="#777" stroke-width="0.9"/><path d="M0.5 4.3 H12 M3 0 V2.2 M9.5 0 V2.2" stroke="#777" stroke-width="0.9"/></svg>
<div class="t" style="left:905px;top:589.00px;font-size:13px;line-height:13px;font-weight:700;color:#111;letter-spacing:-0.380px;">13:47</div>
<div class="b" style="left:1012.5px;top:585px;width:203px;height:19.5px;background:#fff;border:1px solid #dadada;border-radius:4px;box-sizing:border-box;box-shadow:0 1px 1px rgba(0,0,0,0.08)"></div>
<div class="t r" style="left:1079px;top:588.50px;font-size:13px;line-height:13px;font-weight:400;color:#1f70b2;letter-spacing:-0.185px;">Výpočet lhůt</div>
<div class="t r" style="left:641.5px;top:628.30px;font-size:13px;line-height:13px;font-weight:400;color:#5a5a5a;letter-spacing:-0.156px;">Datum a čas otevírání:</div>
<div class="b" style="left:778.5px;top:626px;width:437px;height:20.5px;background:#f2f2f2;border:1px solid #d4d4d4;border-radius:4px;box-sizing:border-box"></div>
<div class="t" style="left:784px;top:630.00px;font-size:13px;line-height:13px;font-weight:700;color:#111;letter-spacing:-0.043px;">19. 5. 2025</div>
<svg class="b" style="left:991px;top:630px" width="13" height="13" viewBox="0 0 13 13"><rect x="0.5" y="1.5" width="11.5" height="10.5" rx="0.8" fill="none" stroke="#777" stroke-width="0.9"/><path d="M0.5 4.3 H12 M3 0 V2.2 M9.5 0 V2.2" stroke="#777" stroke-width="0.9"/></svg>
<div class="t" style="left:1011px;top:630.00px;font-size:13px;line-height:13px;font-weight:700;color:#111;letter-spacing:-0.380px;">13:47</div>
<div class="b" style="left:778.5px;top:667px;width:437px;height:20px;background:#fff;border:1px solid #dadada;border-radius:4px;box-sizing:border-box;box-shadow:0 1px 1px rgba(0,0,0,0.08)"></div>
<div class="t r" style="left:872px;top:671.50px;font-size:13px;line-height:13px;font-weight:400;color:#1f70b2;letter-spacing:-0.284px;">Odeslání výzvy k podání žádosti o účast v ZŘ</div>
<div class="t" style="left:345.5px;top:711.30px;font-size:15px;line-height:15px;font-weight:700;color:#30363d;letter-spacing:-0.163px;">Přehled podaných žádostí o účast</div>
<div class="b" style="left:345px;top:733px;width:1226px;height:206px;border:1px solid #1f70b2;border-radius:9px;background:#fff;box-shadow:inset 0 0 0 1.5px #e3e1e0"></div>
<div class="b" style="left:348px;top:775.2px;width:1222px;height:38px;background:#f2f2f2;border-top:1px solid #dedede;border-bottom:1px solid #d8d8d8;box-sizing:border-box"></div>
<div class="b" style="left:412.9px;top:775.2px;width:1px;height:38px;background:#dcdcdc"></div>
<div class="b" style="left:492.9px;top:775.2px;width:1px;height:38px;background:#dcdcdc"></div>
<div class="b" style="left:674.8px;top:775.2px;width:1px;height:38px;background:#dcdcdc"></div>
<div class="b" style="left:775.0px;top:775.2px;width:1px;height:38px;background:#dcdcdc"></div>
<div class="b" style="left:925.1px;top:775.2px;width:1px;height:38px;background:#dcdcdc"></div>
<div class="b" style="left:1075.0px;top:775.2px;width:1px;height:38px;background:#dcdcdc"></div>
<div class="b" style="left:1215.0px;top:775.2px;width:1px;height:38px;background:#dcdcdc"></div>
<div class="b" style="left:1352.9px;top:775.2px;width:1px;height:38px;background:#dcdcdc"></div>
<svg class="b" style="left:372.5px;top:786.2px" width="17" height="16" viewBox="0 0 17 16"><rect x="0.6" y="0.6" width="15.2" height="14.8" rx="0.8" fill="none" stroke="#555" stroke-width="1.1"/><path d="M3.5 5.5 H12.5 M3.5 10.3 H12.5" stroke="#555" stroke-width="1"/><circle cx="11" cy="5.5" r="1.6" fill="#f2f2f2" stroke="#555" stroke-width="1"/><circle cx="7" cy="10.3" r="1.6" fill="#f2f2f2" stroke="#555" stroke-width="1"/></svg>
<div class="t r" style="left:422.4px;top:785.80px;font-size:13px;line-height:13px;font-weight:400;color:#5f5f5f;letter-spacing:-0.347px;">Číslo</div>
<svg class="b" style="left:476.5px;top:788.8px" width="8" height="7" viewBox="0 0 8 7"><path d="M0.6 0.8 L7.4 0.8 L4 6.4 Z" fill="none" stroke="#555" stroke-width="1.0" stroke-linejoin="round"/></svg>
<div class="t" style="left:502.4px;top:785.80px;font-size:13px;line-height:13px;font-weight:700;color:#111;letter-spacing:-0.558px;">Název dodavatele</div>
<svg class="b" style="left:609.5px;top:786.0px" width="12" height="12" viewBox="0 0 12 12"><path d="M6 11.8 V1.2 M0.8 6.3 L6 1 L11.2 6.3" fill="none" stroke="#111" stroke-width="1.1"/></svg>
<svg class="b" style="left:658px;top:788.8px" width="8" height="7" viewBox="0 0 8 7"><path d="M0.6 0.8 L7.4 0.8 L4 6.4 Z" fill="none" stroke="#555" stroke-width="1.0" stroke-linejoin="round"/></svg>
<div class="t r" style="left:684.3px;top:785.80px;font-size:13px;line-height:13px;font-weight:400;color:#5f5f5f;letter-spacing:-0.600px;">IČO</div>
<svg class="b" style="left:758px;top:788.8px" width="8" height="7" viewBox="0 0 8 7"><path d="M0.6 0.8 L7.4 0.8 L4 6.4 Z" fill="none" stroke="#555" stroke-width="1.0" stroke-linejoin="round"/></svg>
<div class="t r" style="left:784.5px;top:785.80px;font-size:13px;line-height:13px;font-weight:400;color:#5f5f5f;letter-spacing:-0.186px;">Datum podání</div>
<svg class="b" style="left:908.5px;top:788.8px" width="8" height="7" viewBox="0 0 8 7"><path d="M0.6 0.8 L7.4 0.8 L4 6.4 Z" fill="none" stroke="#555" stroke-width="1.0" stroke-linejoin="round"/></svg>
<div class="t r" style="left:934.6px;top:785.80px;font-size:13px;line-height:13px;font-weight:400;color:#5f5f5f;letter-spacing:-0.600px;">Stav</div>
<svg class="b" style="left:1058.5px;top:788.8px" width="8" height="7" viewBox="0 0 8 7"><path d="M0.6 0.8 L7.4 0.8 L4 6.4 Z" fill="none" stroke="#555" stroke-width="1.0" stroke-linejoin="round"/></svg>
<div class="t r" style="left:1084.5px;top:785.80px;font-size:13px;line-height:13px;font-weight:400;color:#5f5f5f;letter-spacing:-0.306px;">Podepsána</div>
<svg class="b" style="left:1198.5px;top:788.8px" width="8" height="7" viewBox="0 0 8 7"><path d="M0.6 0.8 L7.4 0.8 L4 6.4 Z" fill="none" stroke="#555" stroke-width="1.0" stroke-linejoin="round"/></svg>
<div class="t r" style="left:1224.5px;top:785.80px;font-size:13px;line-height:13px;font-weight:400;color:#5f5f5f;letter-spacing:-0.126px;">Listinná podoba</div>
<svg class="b" style="left:1338.5px;top:788.8px" width="8" height="7" viewBox="0 0 8 7"><path d="M0.6 0.8 L7.4 0.8 L4 6.4 Z" fill="none" stroke="#555" stroke-width="1.0" stroke-linejoin="round"/></svg>
<div class="t r" style="left:1363.9px;top:785.80px;font-size:13px;line-height:13px;font-weight:400;color:#5f5f5f;letter-spacing:-0.350px;">Označena jako nepodaná</div>
<svg class="b" style="left:1552.5px;top:788.8px" width="8" height="7" viewBox="0 0 8 7"><path d="M0.6 0.8 L7.4 0.8 L4 6.4 Z" fill="none" stroke="#555" stroke-width="1.0" stroke-linejoin="round"/></svg>
<div class="b" style="left:348px;top:836.6px;width:1222px;height:1px;background:#e3e3e3"></div>
<svg class="b" style="left:359.1px;top:822.1px" width="18" height="5" viewBox="0 0 18 5"><rect x="0.7" y="0.7" width="3.6" height="3.6" rx="1.1" fill="none" stroke="#1f70b2" stroke-width="1.25"/><rect x="6.5" y="0.7" width="3.6" height="3.6" rx="1.1" fill="none" stroke="#1f70b2" stroke-width="1.25"/><rect x="12.299999999999999" y="0.7" width="3.6" height="3.6" rx="1.1" fill="none" stroke="#1f70b2" stroke-width="1.25"/></svg>
<svg class="b" style="left:385.2px;top:816.2px" width="17" height="17" viewBox="0 0 17 17"><circle cx="8.5" cy="8.5" r="7.6" fill="none" stroke="#1f70b2" stroke-width="1.2"/><path d="M8.1 4.8 V5.4 M7.6 7.5 L8.3 7.3 L8.3 11.8 Q8.6 12.6 9.6 12.2" fill="none" stroke="#1f70b2" stroke-width="1.3"/></svg>
<div class="t r" style="left:422px;top:818.40px;font-size:13px;line-height:13px;font-weight:400;color:#111;letter-spacing:-0.180px;">001</div>
<div class="t r" style="left:502.3px;top:818.40px;font-size:13px;line-height:13px;font-weight:400;color:#111;letter-spacing:-0.135px;">Dodavatel - školení 2</div>
<div class="t r" style="left:684.2px;top:818.40px;font-size:13px;line-height:13px;font-weight:400;color:#111;letter-spacing:-0.001px;">12345678</div>
<div class="t r" style="left:784.3px;top:818.40px;font-size:13px;line-height:13px;font-weight:400;color:#111;letter-spacing:-0.053px;">19. 5. 2025 11:49</div>
<div class="t r" style="left:934.4px;top:818.40px;font-size:13px;line-height:13px;font-weight:400;color:#111;letter-spacing:-0.520px;">Otevřena</div>
<svg class="b" style="left:1141.8px;top:819.6px" width="9" height="9" viewBox="0 0 9 9"><path d="M1 1 L8 8 M8 1 L1 8" stroke="#d0282e" stroke-width="2"/></svg>
<svg class="b" style="left:1281.8px;top:819.6px" width="9" height="9" viewBox="0 0 9 9"><path d="M1 1 L8 8 M8 1 L1 8" stroke="#d0282e" stroke-width="2"/></svg>
<svg class="b" style="left:1458.7px;top:819.6px" width="9" height="9" viewBox="0 0 9 9"><path d="M1 1 L8 8 M8 1 L1 8" stroke="#d0282e" stroke-width="2"/></svg>
<div class="b" style="left:348px;top:861.6px;width:1222px;height:1px;background:#e3e3e3"></div>
<svg class="b" style="left:359.1px;top:847.1px" width="18" height="5" viewBox="0 0 18 5"><rect x="0.7" y="0.7" width="3.6" height="3.6" rx="1.1" fill="none" stroke="#1f70b2" stroke-width="1.25"/><rect x="6.5" y="0.7" width="3.6" height="3.6" rx="1.1" fill="none" stroke="#1f70b2" stroke-width="1.25"/><rect x="12.299999999999999" y="0.7" width="3.6" height="3.6" rx="1.1" fill="none" stroke="#1f70b2" stroke-width="1.25"/></svg>
<svg class="b" style="left:385.2px;top:841.2px" width="17" height="17" viewBox="0 0 17 17"><circle cx="8.5" cy="8.5" r="7.6" fill="none" stroke="#1f70b2" stroke-width="1.2"/><path d="M8.1 4.8 V5.4 M7.6 7.5 L8.3 7.3 L8.3 11.8 Q8.6 12.6 9.6 12.2" fill="none" stroke="#1f70b2" stroke-width="1.3"/></svg>
<div class="t r" style="left:422px;top:843.40px;font-size:13px;line-height:13px;font-weight:400;color:#111;letter-spacing:-0.180px;">002</div>
<div class="t r" style="left:502.3px;top:843.40px;font-size:13px;line-height:13px;font-weight:400;color:#111;letter-spacing:-0.135px;">Dodavatel - školení 3</div>
<div class="t r" style="left:684.2px;top:843.40px;font-size:13px;line-height:13px;font-weight:400;color:#111;letter-spacing:-0.001px;">12345678</div>
<div class="t r" style="left:784.3px;top:843.40px;font-size:13px;line-height:13px;font-weight:400;color:#111;letter-spacing:-0.053px;">19. 5. 2025 11:50</div>
<div class="t r" style="left:934.4px;top:843.40px;font-size:13px;line-height:13px;font-weight:400;color:#111;letter-spacing:-0.520px;">Otevřena</div>
<svg class="b" style="left:1141.8px;top:844.6px" width="9" height="9" viewBox="0 0 9 9"><path d="M1 1 L8 8 M8 1 L1 8" stroke="#d0282e" stroke-width="2"/></svg>
<svg class="b" style="left:1281.8px;top:844.6px" width="9" height="9" viewBox="0 0 9 9"><path d="M1 1 L8 8 M8 1 L1 8" stroke="#d0282e" stroke-width="2"/></svg>
<svg class="b" style="left:1458.7px;top:844.6px" width="9" height="9" viewBox="0 0 9 9"><path d="M1 1 L8 8 M8 1 L1 8" stroke="#d0282e" stroke-width="2"/></svg>
<div class="b" style="left:348px;top:862.6px;width:1222px;height:25px;background:#c4daf3;border-bottom:1px solid #86b4e6;box-sizing:border-box"></div>
<svg class="b" style="left:359.1px;top:872.1px" width="18" height="5" viewBox="0 0 18 5"><rect x="0.7" y="0.7" width="3.6" height="3.6" rx="1.1" fill="none" stroke="#1f70b2" stroke-width="1.25"/><rect x="6.5" y="0.7" width="3.6" height="3.6" rx="1.1" fill="none" stroke="#1f70b2" stroke-width="1.25"/><rect x="12.299999999999999" y="0.7" width="3.6" height="3.6" rx="1.1" fill="none" stroke="#1f70b2" stroke-width="1.25"/></svg>
<svg class="b" style="left:385.2px;top:866.2px" width="17" height="17" viewBox="0 0 17 17"><circle cx="8.5" cy="8.5" r="7.6" fill="none" stroke="#1f70b2" stroke-width="1.2"/><path d="M8.1 4.8 V5.4 M7.6 7.5 L8.3 7.3 L8.3 11.8 Q8.6 12.6 9.6 12.2" fill="none" stroke="#1f70b2" stroke-width="1.3"/></svg>
<div class="t r" style="left:422px;top:868.40px;font-size:13px;line-height:13px;font-weight:400;color:#111;letter-spacing:-0.180px;">003</div>
<div class="t r" style="left:502.3px;top:868.40px;font-size:13px;line-height:13px;font-weight:400;color:#111;letter-spacing:-0.135px;">Dodavatel - školení 5</div>
<div class="t r" style="left:684.2px;top:868.40px;font-size:13px;line-height:13px;font-weight:400;color:#111;letter-spacing:-0.001px;">12345678</div>
<div class="t r" style="left:784.3px;top:868.40px;font-size:13px;line-height:13px;font-weight:400;color:#111;letter-spacing:-0.053px;">19. 5. 2025 11:58</div>
<div class="t r" style="left:934.4px;top:868.40px;font-size:13px;line-height:13px;font-weight:400;color:#111;letter-spacing:-0.520px;">Otevřena</div>
<svg class="b" style="left:1141.8px;top:869.6px" width="9" height="9" viewBox="0 0 9 9"><path d="M1 1 L8 8 M8 1 L1 8" stroke="#d0282e" stroke-width="2"/></svg>
<svg class="b" style="left:1281.8px;top:869.6px" width="9" height="9" viewBox="0 0 9 9"><path d="M1 1 L8 8 M8 1 L1 8" stroke="#d0282e" stroke-width="2"/></svg>
<svg class="b" style="left:1458.2px;top:870.4px" width="10" height="8" viewBox="0 0 10 8"><path d="M0.9 4.3 L3.7 7 L9.6 0.9" fill="none" stroke="#3fae49" stroke-width="2.1"/></svg>
<div class="b" style="left:348px;top:911.6px;width:1222px;height:1px;background:#e3e3e3"></div>
<svg class="b" style="left:359.1px;top:897.1px" width="18" height="5" viewBox="0 0 18 5"><rect x="0.7" y="0.7" width="3.6" height="3.6" rx="1.1" fill="none" stroke="#1f70b2" stroke-width="1.25"/><rect x="6.5" y="0.7" width="3.6" height="3.6" rx="1.1" fill="none" stroke="#1f70b2" stroke-width="1.25"/><rect x="12.299999999999999" y="0.7" width="3.6" height="3.6" rx="1.1" fill="none" stroke="#1f70b2" stroke-width="1.25"/></svg>
<svg class="b" style="left:385.2px;top:891.2px" width="17" height="17" viewBox="0 0 17 17"><circle cx="8.5" cy="8.5" r="7.6" fill="none" stroke="#1f70b2" stroke-width="1.2"/><path d="M8.1 4.8 V5.4 M7.6 7.5 L8.3 7.3 L8.3 11.8 Q8.6 12.6 9.6 12.2" fill="none" stroke="#1f70b2" stroke-width="1.3"/></svg>
<div class="t r" style="left:422px;top:893.40px;font-size:13px;line-height:13px;font-weight:400;color:#111;letter-spacing:-0.180px;">004</div>
<div class="t r" style="left:502.3px;top:893.40px;font-size:13px;line-height:13px;font-weight:400;color:#111;letter-spacing:-0.135px;">Dodavatel - školení 6</div>
<div class="t r" style="left:684.2px;top:893.40px;font-size:13px;line-height:13px;font-weight:400;color:#111;letter-spacing:-0.001px;">45359326</div>
<div class="t r" style="left:784.3px;top:893.40px;font-size:13px;line-height:13px;font-weight:400;color:#111;letter-spacing:-0.053px;">19. 5. 2025 11:58</div>
<div class="t r" style="left:934.4px;top:893.40px;font-size:13px;line-height:13px;font-weight:400;color:#111;letter-spacing:-0.520px;">Otevřena</div>
<svg class="b" style="left:1141.8px;top:894.6px" width="9" height="9" viewBox="0 0 9 9"><path d="M1 1 L8 8 M8 1 L1 8" stroke="#d0282e" stroke-width="2"/></svg>
<svg class="b" style="left:1281.8px;top:894.6px" width="9" height="9" viewBox="0 0 9 9"><path d="M1 1 L8 8 M8 1 L1 8" stroke="#d0282e" stroke-width="2"/></svg>
<svg class="b" style="left:1458.7px;top:894.6px" width="9" height="9" viewBox="0 0 9 9"><path d="M1 1 L8 8 M8 1 L1 8" stroke="#d0282e" stroke-width="2"/></svg>
<div class="b" style="left:348px;top:936.6px;width:1222px;height:1px;background:#e3e3e3"></div>
<svg class="b" style="left:359.1px;top:922.1px" width="18" height="5" viewBox="0 0 18 5"><rect x="0.7" y="0.7" width="3.6" height="3.6" rx="1.1" fill="none" stroke="#1f70b2" stroke-width="1.25"/><rect x="6.5" y="0.7" width="3.6" height="3.6" rx="1.1" fill="none" stroke="#1f70b2" stroke-width="1.25"/><rect x="12.299999999999999" y="0.7" width="3.6" height="3.6" rx="1.1" fill="none" stroke="#1f70b2" stroke-width="1.25"/></svg>
<svg class="b" style="left:385.2px;top:916.2px" width="17" height="17" viewBox="0 0 17 17"><circle cx="8.5" cy="8.5" r="7.6" fill="none" stroke="#1f70b2" stroke-width="1.2"/><path d="M8.1 4.8 V5.4 M7.6 7.5 L8.3 7.3 L8.3 11.8 Q8.6 12.6 9.6 12.2" fill="none" stroke="#1f70b2" stroke-width="1.3"/></svg>
<div class="t r" style="left:422px;top:918.40px;font-size:13px;line-height:13px;font-weight:400;color:#111;letter-spacing:-0.180px;">005</div>
<div class="t r" style="left:502.3px;top:918.40px;font-size:13px;line-height:13px;font-weight:400;color:#111;letter-spacing:-0.135px;">Dodavatel - školení 6</div>
<div class="t r" style="left:684.2px;top:918.40px;font-size:13px;line-height:13px;font-weight:400;color:#111;letter-spacing:-0.001px;">45359326</div>
<div class="t r" style="left:784.3px;top:918.40px;font-size:13px;line-height:13px;font-weight:400;color:#111;letter-spacing:-0.114px;">19. 5. 2025 12:00</div>
<div class="t r" style="left:934.4px;top:918.40px;font-size:13px;line-height:13px;font-weight:400;color:#111;letter-spacing:-0.186px;">Otevření zaevidováno</div>
<svg class="b" style="left:1141.8px;top:919.6px" width="9" height="9" viewBox="0 0 9 9"><path d="M1 1 L8 8 M8 1 L1 8" stroke="#d0282e" stroke-width="2"/></svg>
<svg class="b" style="left:1281.3px;top:920.4px" width="10" height="8" viewBox="0 0 10 8"><path d="M0.9 4.3 L3.7 7 L9.6 0.9" fill="none" stroke="#3fae49" stroke-width="2.1"/></svg>
<svg class="b" style="left:1458.7px;top:919.6px" width="9" height="9" viewBox="0 0 9 9"><path d="M1 1 L8 8 M8 1 L1 8" stroke="#d0282e" stroke-width="2"/></svg>
<div class="b" style="left:1353.4px;top:775.8000000000001px;width:217.5999999999999px;height:37.8px;border:1.5px solid #d3262c;box-sizing:border-box"></div>
<svg class="b" style="left:373px;top:748px" width="17" height="17" viewBox="0 0 17 17"><circle cx="8" cy="6.2" r="5.5" fill="none" stroke="#1f70b2" stroke-width="1.3"/><path d="M4.2 10.2 L1 13.3 L3.8 13.6 L4.3 16.2 L6.6 11.9 M11.8 10.2 L15 13.3 L12.2 13.6 L11.7 16.2 L9.4 11.9" fill="none" stroke="#1f70b2" stroke-width="1.2" stroke-linejoin="round"/></svg>
<div class="b" style="left:412.5px;top:747.2px;width:1.3px;height:17.799999999999955px;background:#1f70b2"></div>
<svg class="b" style="left:421.5px;top:748px" width="17" height="17" viewBox="0 0 17 17"><path d="M4.3 3.3 H2.2 Q0.9 3.3 0.9 4.6 V14.6 Q0.9 15.9 2.2 15.9 H7.2 M13.1 7 V4.6 Q13.1 3.3 11.8 3.3 H9.7" fill="none" stroke="#1f70b2" stroke-width="1.2"/><path d="M4.4 4.6 V3.2 Q4.4 0.8 7 0.8 Q9.6 0.8 9.6 3.2 V4.6 Z" fill="none" stroke="#1f70b2" stroke-width="1.1"/><circle cx="7" cy="3" r="0.7" fill="#1f70b2"/><path d="M3.6 7.3 H7.2 M3.6 10 H5.9 M3.6 12.3 H5.9" stroke="#1f70b2" stroke-width="1.3"/><polygon points="12.20,6.90 13.65,8.89 16.10,9.15 15.10,11.40 16.10,13.65 13.65,13.91 12.20,15.90 10.75,13.91 8.30,13.65 9.30,11.40 8.30,9.15 10.75,8.89" fill="#fff" stroke="#1f70b2" stroke-width="1.15" stroke-linejoin="round"/><circle cx="12.2" cy="11.4" r="1.3" fill="none" stroke="#1f70b2" stroke-width="1"/></svg>
<div class="t r" style="left:442.4px;top:750.20px;font-size:13px;line-height:13px;font-weight:400;color:#1f70b2;letter-spacing:-0.159px;">Evidovat žádost o účast</div>
<div class="b" style="left:583.5px;top:747.2px;width:1.3px;height:17.799999999999955px;background:#1f70b2"></div>
<div class="b" style="left:588.2px;top:743px;width:121.6px;height:25.8px;background:#4caf50;border-radius:4px"></div>
<svg class="b" style="left:594.5px;top:747.5px" width="17" height="17" viewBox="0 0 17 17"><path d="M4.3 3.3 H2.2 Q0.9 3.3 0.9 4.6 V14.6 Q0.9 15.9 2.2 15.9 H7.2 M13.1 7 V4.6 Q13.1 3.3 11.8 3.3 H9.7" fill="none" stroke="#fff" stroke-width="1.2"/><path d="M4.4 4.6 V3.2 Q4.4 0.8 7 0.8 Q9.6 0.8 9.6 3.2 V4.6 Z" fill="none" stroke="#fff" stroke-width="1.1"/><circle cx="7" cy="3" r="0.7" fill="#fff"/><path d="M3.6 7.3 H7.2 M3.6 10 H5.9 M3.6 12.3 H5.9" stroke="#fff" stroke-width="1.3"/><circle cx="12" cy="12.1" r="4.1" fill="#4caf50" stroke="#fff" stroke-width="1.2"/><path d="M9.6 12.1 H14.2 M12.4 10.3 L14.2 12.1 L12.4 13.9" fill="none" stroke="#fff" stroke-width="1.2"/></svg>
<div class="t r" style="left:614px;top:749.80px;font-size:13px;line-height:13px;font-weight:400;color:#fff;letter-spacing:-0.527px;">Ukončit otevírání</div>
<svg class="b" style="left:721px;top:748px" width="17" height="17" viewBox="0 0 17 17"><path d="M4.3 3.3 H2.2 Q0.9 3.3 0.9 4.6 V14.6 Q0.9 15.9 2.2 15.9 H7.2 M13.1 7 V4.6 Q13.1 3.3 11.8 3.3 H9.7" fill="none" stroke="#1f70b2" stroke-width="1.2"/><path d="M4.4 4.6 V3.2 Q4.4 0.8 7 0.8 Q9.6 0.8 9.6 3.2 V4.6 Z" fill="none" stroke="#1f70b2" stroke-width="1.1"/><circle cx="7" cy="3" r="0.7" fill="#1f70b2"/><path d="M3.6 7.3 H7.2 M3.6 10 H5.9 M3.6 12.3 H5.9" stroke="#1f70b2" stroke-width="1.3"/><circle cx="12" cy="12.1" r="4.1" fill="#fff" stroke="#1f70b2" stroke-width="1.2"/><path d="M9.6 12.1 H14.2 M12.4 10.3 L14.2 12.1 L12.4 13.9" fill="none" stroke="#1f70b2" stroke-width="1.2"/></svg>
<div class="t r" style="left:741.8px;top:750.20px;font-size:13px;line-height:13px;font-weight:400;color:#1f70b2;letter-spacing:-0.155px;">Stáhnout žádosti o účast</div>
<div class="b" style="left:888.5px;top:747.2px;width:1.3px;height:17.799999999999955px;background:#1f70b2"></div>
<svg class="b" style="left:897px;top:748px" width="16" height="17" viewBox="0 0 16 17"><rect x="3.9" y="0.6" width="8.4" height="3.9" rx="1" fill="none" stroke="#1f70b2" stroke-width="1.2"/><path d="M3.9 11.4 H1.9 Q0.7 11.4 0.7 10.2 V5.7 Q0.7 4.5 1.9 4.5 H14 Q15.2 4.5 15.2 5.7 V10.2 Q15.2 11.4 14 11.4 H12.3" fill="none" stroke="#1f70b2" stroke-width="1.2"/><rect x="3.9" y="8.5" width="8.4" height="6.8" rx="0.8" fill="#fff" stroke="#1f70b2" stroke-width="1.2"/><path d="M5.6 10.6 H10.6 M5.6 12.7 H9.4" stroke="#1f70b2" stroke-width="1.1"/><path d="M2.3 6.5 H3.7" stroke="#1f70b2" stroke-width="1"/></svg>
<svg class="b" style="left:917.3px;top:753px" width="8" height="7" viewBox="0 0 8 7"><path d="M0.6 0.8 L7.4 0.8 L4 6.4 Z" fill="none" stroke="#1f70b2" stroke-width="1.0" stroke-linejoin="round"/></svg>
<div class="b" style="left:936.5px;top:747.2px;width:1.3px;height:17.799999999999955px;background:#1f70b2"></div>
<svg class="b" style="left:946.8px;top:748px" width="14" height="17" viewBox="0 0 14 17"><path d="M3 5.6 H1.9 Q0.7 5.6 0.7 6.8 V14.3 Q0.7 15.5 1.9 15.5 H11.4 Q12.6 15.5 12.6 14.3 V6.8 Q12.6 5.6 11.4 5.6 H10" fill="none" stroke="#1f70b2" stroke-width="1.25"/><path d="M6.5 7.8 V0.8 M3.9 3.3 L6.5 0.7 L9.1 3.3" fill="none" stroke="#1f70b2" stroke-width="1.25"/></svg>
<svg class="b" style="left:965px;top:753px" width="8" height="7" viewBox="0 0 8 7"><path d="M0.6 0.8 L7.4 0.8 L4 6.4 Z" fill="none" stroke="#1f70b2" stroke-width="1.0" stroke-linejoin="round"/></svg>
<div class="b" style="left:984.5px;top:747.2px;width:1.3px;height:17.799999999999955px;background:#1f70b2"></div>
<svg class="b" style="left:1487.5px;top:748px" width="17" height="17" viewBox="0 0 17 17"><path d="M1.2 1.1 H15.9 Q16.7 1.1 16.4 2.3 Q15.4 7.6 10.4 8.9 V13.7 L6.5 16 V8.9 Q1.6 7.6 0.6 2.3 Q0.4 1.1 1.2 1.1 Z" fill="none" stroke="#1f70b2" stroke-width="1.2" stroke-linejoin="round"/></svg>
<div class="b" style="left:1511.5px;top:747.2px;width:1.3px;height:17.799999999999955px;background:#1f70b2"></div>
<svg class="b" style="left:1524.3px;top:752.5px" width="8" height="7" viewBox="0 0 8 7"><path d="M0.6 0.8 L7.4 0.8 L4 6.4 Z" fill="none" stroke="#1f70b2" stroke-width="1.0" stroke-linejoin="round"/></svg>
<div class="t r" style="left:1539.6px;top:752.40px;font-size:13px;line-height:13px;font-weight:400;color:#1f70b2;letter-spacing:-0.600px;">MW</div>
<div class="b" style="left:1568.5px;top:747.2px;width:1.3px;height:17.799999999999955px;background:#1f70b2"></div>
</body></html>
